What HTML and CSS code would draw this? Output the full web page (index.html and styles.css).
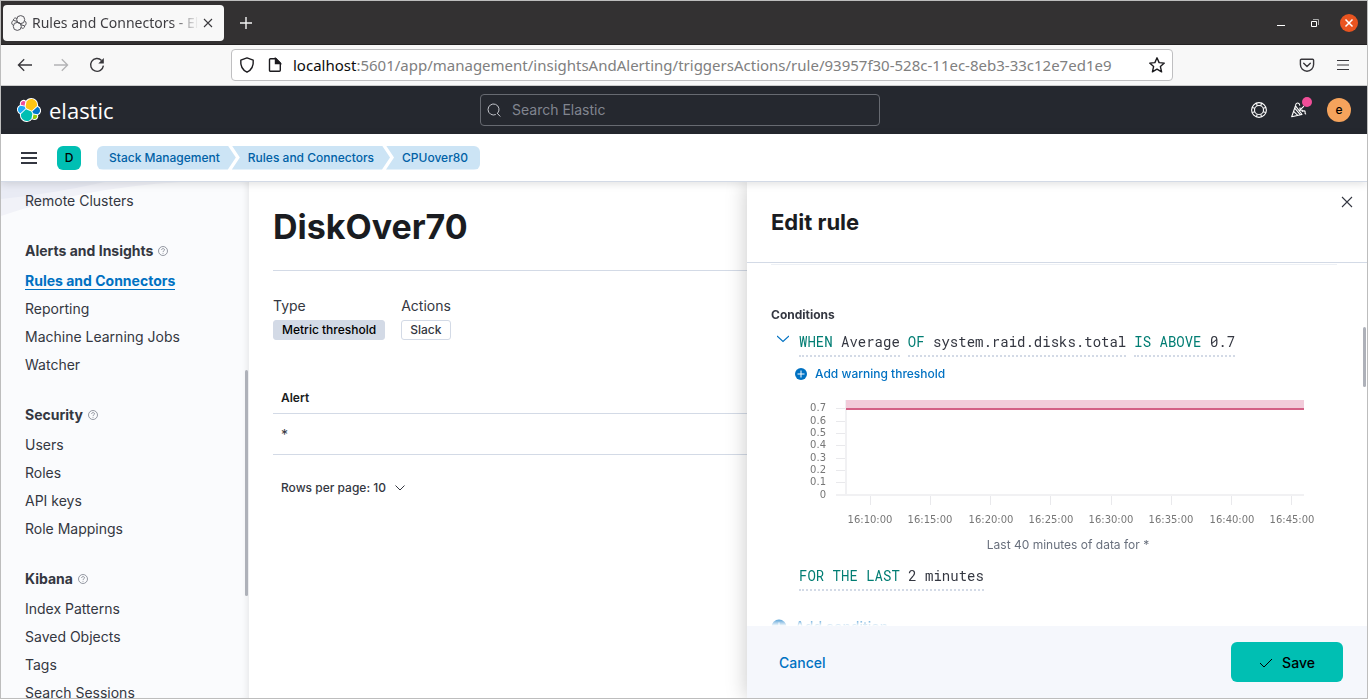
FILE: index.html
```html
<!DOCTYPE html>
<html lang="en">
<head>
<meta charset="utf-8">
<title>Rules and Connectors - Elastic</title>
<link rel="stylesheet" href="styles.css">
</head>
<body>
<div class="window">
  <div class="tabbar">
    <div class="tab">
      <svg class="tab-icon" viewBox="0 0 16 16" width="16" height="16" fill="none" stroke="#55545a"><circle cx="9.7" cy="4.6" r="4"/><circle cx="6.3" cy="11.4" r="4"/><path d="M5.9 3.6a2 2 0 0 0-3.4 1.8M2.5 5.4a2.7 2.7 0 0 0-.2 5M13.4 5.8a2.7 2.7 0 0 1 .2 5M13.6 10.8a2 2 0 0 1-3.5 1.7M2.5 5.4l3.5 1M13.6 10.8l-3.6-1M6.3 6.8l4 2.5"/></svg>
      <span class="tab-title">Rules and Connectors - Elastic</span>
      <button class="icon-btn tab-close" aria-label="Close tab"><svg viewBox="0 0 10 10" width="10" height="10" fill="none" stroke="#3b3a3e" stroke-width="1.1"><path d="M1 1l8 8M9 1L1 9"/></svg></button>
    </div>
    <button class="icon-btn new-tab" aria-label="New tab"><svg viewBox="0 0 12 12" width="12" height="12" stroke="#f4f4f4" stroke-width="1.4"><path d="M6 0v12M0 6h12"/></svg></button>
    <div class="win-controls">
      <button class="icon-btn" aria-label="Minimize"><svg viewBox="0 0 12 12" width="12" height="12"><path d="M2 8h8v1H2z" fill="#fff"/></svg></button>
      <button class="icon-btn" aria-label="Restore"><svg viewBox="0 0 12 12" width="12" height="12" fill="none"><path d="M4 2.500h5.500V8" stroke="#aaa"/><path d="M2.500 4.500h5v5h-5z" stroke="#fff"/></svg></button>
      <button class="icon-btn win-close" aria-label="Close window"><svg viewBox="0 0 10 10" width="10" height="10" stroke="#fff" stroke-width="1.5"><path d="M1.500 1.500l7 7M8.500 1.500l-7 7"/></svg></button>
    </div>
  </div>

  <div class="toolbar">
    <button class="icon-btn" aria-label="Back"><svg viewBox="0 0 16 16" width="16" height="16" fill="none" stroke="#38373b" stroke-width="1.3"><path d="M15 8H1.500M7.200 2.200L1.400 8l5.800 5.800"/></svg></button>
    <button class="icon-btn" aria-label="Forward"><svg viewBox="0 0 16 16" width="16" height="16" fill="none" stroke="#b3b3b5" stroke-width="1.3"><path d="M1 8h13.500M8.800 2.200L14.600 8l-5.800 5.800"/></svg></button>
    <button class="icon-btn" aria-label="Reload"><svg viewBox="0 0 16 16" width="16" height="16" fill="none" stroke="#38373b" stroke-width="1.4"><path d="M12.600 3.400a6.400 6.400 0 1 0 1.800 5.300"/><path d="M14.800 1v5.500H9.300z" fill="#38373b" stroke="none"/></svg></button>
    <div class="urlbar">
      <svg viewBox="0 0 16 16" width="16" height="16" fill="none" stroke="#1c1b1f" stroke-width="1.4"><path d="M8 .9l6.200 2.300c.5 5.200-1.300 9.500-6.200 12-4.900-2.500-6.700-6.800-6.200-12z" stroke-linejoin="round"/></svg>
      <svg viewBox="0 0 16 16" width="16" height="16" fill="none" stroke="#1c1b1f" stroke-width="1.4"><path d="M3.500 1.700H9l4.300 4.300v7.300a1 1 0 0 1-1 1H3.500a1 1 0 0 1-1-1V2.700a1 1 0 0 1 1-1z"/><path d="M8.500 1.500v5h5z" fill="#1c1b1f"/></svg>
      <div class="url" role="textbox" aria-label="Address"><span class="url-host">localhost</span>:5601/app/management/insightsAndAlerting/triggersActions/rule/93957f30-528c-11ec-8eb3-33c12e7ed1e9</div>
      <button class="icon-btn" aria-label="Bookmark"><svg viewBox="0 0 16 16" width="16" height="16" fill="none" stroke="#1c1b1f" stroke-width="1.4" stroke-linejoin="round"><path d="M8 .8l2.100 4.800 5.200.5-3.900 3.500 1.200 5.200L8 12.100l-4.600 2.700 1.200-5.200L.7 6.100l5.200-.5z"/></svg></button>
    </div>
    <div class="toolbar-end">
      <button class="icon-btn" aria-label="Pocket"><svg viewBox="0 0 16 16" width="16" height="16" fill="none" stroke="#38373b" stroke-width="1.400" stroke-linecap="round" stroke-linejoin="round"><path d="M2.400 2.200h11.200a1 1 0 0 1 1 1v4.400a6.600 6.600 0 0 1-13.200 0V3.200a1 1 0 0 1 1-1z"/><path d="M4.700 6.300L8 9.500l3.300-3.200"/></svg></button>
      <button class="icon-btn" aria-label="Menu"><svg viewBox="0 0 16 16" width="16" height="16" stroke="#38373b" stroke-width="1.200"><path d="M2 3.500h12M2 8h12M2 12.500h12"/></svg></button>
    </div>
  </div>

  <header class="topbar">
    <a class="brand" href="#">
      <svg viewBox="0 0 32 32" width="24" height="24"><g stroke="#fff" stroke-width="2.800" stroke-linejoin="round" fill="#fff"><path d="M12.580 13.787l7.002 3.211 7.066-6.213a7.849 7.849 0 0 0 .152-1.557c0-4.287-3.464-7.774-7.722-7.774a7.690 7.690 0 0 0-6.354 3.362l-1.176 6.117z"/><path d="M5.333 21.228a7.964 7.964 0 0 0-.15 1.587c0 4.298 3.481 7.794 7.760 7.794 2.575 0 4.975-1.282 6.410-3.428l1.165-6.095-1.555-2.985-7.035-3.215z"/><path d="M5.288 9.067l4.800 1.137L11.140 4.710a3.785 3.785 0 0 0-6.050 3.014c0 .458.067.909.198 1.343z"/><path d="M4.872 10.214c-2.145.713-3.600 2.785-3.600 5.057 0 2.212 1.362 4.188 3.410 4.970l6.734-6.106-1.236-2.650z"/><path d="M20.873 27.184a3.787 3.787 0 0 0 2.298.783 3.784 3.784 0 0 0 3.583-4.997l-4.796-1.126z"/><path d="M21.848 20.564l5.280 1.238c2.146-.714 3.602-2.786 3.602-5.058a5.337 5.337 0 0 0-3.418-4.960l-6.902 6.052z"/></g><path fill="#fec514" d="M12.580 13.787l7.002 3.211 7.066-6.213a7.849 7.849 0 0 0 .152-1.557c0-4.287-3.464-7.774-7.722-7.774a7.690 7.690 0 0 0-6.354 3.362l-1.176 6.117z"/><path fill="#00bfb3" d="M5.333 21.228a7.964 7.964 0 0 0-.15 1.587c0 4.298 3.481 7.794 7.760 7.794 2.575 0 4.975-1.282 6.410-3.428l1.165-6.095-1.555-2.985-7.035-3.215z"/><path fill="#f04e98" d="M5.288 9.067l4.800 1.137L11.140 4.710a3.785 3.785 0 0 0-6.050 3.014c0 .458.067.909.198 1.343z"/><path fill="#1ba9f5" d="M4.872 10.214c-2.145.713-3.600 2.785-3.600 5.057 0 2.212 1.362 4.188 3.410 4.970l6.734-6.106-1.236-2.650z"/><path fill="#93c90e" d="M20.873 27.184a3.787 3.787 0 0 0 2.298.783 3.784 3.784 0 0 0 3.583-4.997l-4.796-1.126z"/><path fill="#07c" d="M21.848 20.564l5.280 1.238c2.146-.714 3.602-2.786 3.602-5.058a5.337 5.337 0 0 0-3.418-4.960l-6.902 6.052z"/></svg>
      <span>elastic</span>
    </a>
    <label class="search">
      <svg viewBox="0 0 16 16" width="16" height="16" fill="none" stroke="#c3c5cb"><path d="M9.800 12.500a5.500 5.500 0 1 1 1.700-1.200M11 11l3.300 3.500"/></svg>
      <input type="search" placeholder="Search Elastic" aria-label="Search Elastic">
    </label>
    <div class="topbar-end">
      <button class="icon-btn" aria-label="Help"><svg viewBox="0 0 16 16" width="16" height="16" fill="none" stroke="#fff" stroke-width="1.100"><circle cx="8" cy="8" r="7.400"/><circle cx="8" cy="8" r="4.500"/><path d="M5.500 1.200l.7 2.700M10.500 1.200l-.7 2.700M5.500 14.800l.7-2.700M10.500 14.800l-.7-2.700M1.200 5.500l2.700.7M1.200 10.500l2.700-.7M14.800 5.500l-2.700.7M14.800 10.500l-2.700-.7"/></svg></button>
      <button class="icon-btn news" aria-label="News"><svg viewBox="0 0 16 16" width="16" height="16" fill="none" stroke="#fff" stroke-width="1.100" stroke-linejoin="round"><path d="M4.500 3.800L.7 14.800l10.300-2.300zM3.700 6.200l5.500 6.500M2.600 9.300l4.200 4M4.700 3.900C4.300 1.600 6.300.200 8 1.700c.6.600.7 1.300.6 2M8.800 8.200L13 4.200M9 5.500v2.800h2.800M10.800 9.700c1.700-1.500 3.700-.9 3.300.8-.2 1 .2 1.600 1 1.300"/></svg><i class="dot"></i></button>
      <button class="avatar">e</button>
    </div>
  </header>

  <nav class="crumbbar" aria-label="Breadcrumbs">
    <button class="icon-btn" aria-label="Toggle navigation"><svg viewBox="0 0 16 16" width="16" height="16" fill="#343741"><path d="M0 2h16v2H0zM0 7h16v2H0zM0 12h16v2H0z"/></svg></button>
    <button class="space">D</button>
    <div class="crumbs"><a href="#">Stack Management</a><a href="#">Rules and Connectors</a><a href="#">CPUover80</a></div>
  </nav>

  <div class="content">
    <nav class="sidebar" aria-label="Management">
      <svg class="sidebar-art" viewBox="0 0 248 36" width="248" height="36"><path d="M0 0h180Q80 6 0 34z" fill="#f1f2f8"/><path d="M0 0h104Q50 12 0 17z" fill="#e9ebf4"/></svg>
      <ul><li><a href="#">Remote Clusters</a></li></ul>
      <h2>Alerts and Insights <svg viewBox="0 0 10 10" width="10" height="10"><use href="#q"/></svg></h2>
      <ul>
        <li><a class="current" href="#">Rules and Connectors</a></li>
        <li><a href="#">Reporting</a></li>
        <li><a href="#">Machine Learning Jobs</a></li>
        <li><a href="#">Watcher</a></li>
      </ul>
      <h2>Security <svg viewBox="0 0 10 10" width="10" height="10"><use href="#q"/></svg></h2>
      <ul>
        <li><a href="#">Users</a></li>
        <li><a href="#">Roles</a></li>
        <li><a href="#">API keys</a></li>
        <li><a href="#">Role Mappings</a></li>
      </ul>
      <h2>Kibana <svg viewBox="0 0 10 10" width="10" height="10"><g id="q" fill="none" stroke="#7b808c" stroke-width=".8"><circle cx="5" cy="5" r="4.500"/><path d="M3.600 4c0-1.900 2.900-1.800 2.900-.2C6.500 4.900 5 4.800 5 6M5 6.900v.9"/></g></svg></h2>
      <ul>
        <li><a href="#">Index Patterns</a></li>
        <li><a href="#">Saved Objects</a></li>
        <li><a href="#">Tags</a></li>
        <li><a href="#">Search Sessions</a></li>
      </ul>
      <i class="thumb thumb-side"></i>
    </nav>

    <main class="page">
      <h1>DiskOver70</h1>
      <div class="facts">
        <div><div class="fact-label">Type</div><span class="badge badge-solid">Metric threshold</span></div>
        <div><div class="fact-label">Actions</div><span class="badge">Slack</span></div>
      </div>
      <table class="alerts">
        <thead><tr><th scope="col">Alert</th></tr></thead>
        <tbody><tr><td>*</td></tr></tbody>
      </table>
      <button class="rows">Rows per page: 10 <svg viewBox="0 0 10 10" width="10" height="10" fill="none" stroke="#343741"><path d="M.5 2.500L5 7l4.500-4.500"/></svg></button>
    </main>

    <section class="flyout" aria-label="Edit rule">
      <header class="flyout-head">
        <h2>Edit rule</h2>
        <button class="icon-btn flyout-close" aria-label="Close"><svg viewBox="0 0 12 12" width="12" height="12" stroke="#343741" stroke-width="1.100"><path d="M1 1l10 10M11 1L1 11"/></svg></button>
      </header>
      <div class="flyout-body">
        <hr>
        <h3>Conditions</h3>
        <div class="cond">
          <button class="icon-btn toggle" aria-label="Collapse condition"><svg viewBox="0 0 12 12" width="12" height="12" fill="none" stroke="#0071c2" stroke-width="1.100"><path d="M0 3l6 5.500L12 3"/></svg></button>
          <button class="expr"><b>WHEN</b> Average</button>
          <button class="expr"><b>OF</b> system.raid.disks.total</button>
          <button class="expr"><b>IS ABOVE</b> 0.7</button>
        </div>
        <div class="indent">
          <button class="add"><svg viewBox="0 0 12 12" width="12" height="12"><circle cx="6" cy="6" r="6" fill="#0071c2"/><path d="M6 2.500v7M2.500 6h7" stroke="#fff"/></svg>Add warning threshold</button>
          <svg class="chart" viewBox="0 0 546 134" role="img" aria-label="Metric threshold chart">
            <path d="M51 7v95M41 102h468" stroke="#f1f1f3" stroke-width="2" fill="none"/>
            <path d="M41 15.500h9M41 28.500h9M41 40.500h9M41 52.500h9M41 65.500h9M41 77.500h9M41 89.500h9M75.500 103v9M135.500 103v9M195.500 103v9M255.500 103v9M316.500 103v9M376.500 103v9M436.500 103v9M496.500 103v9" stroke="#e9e9ec"/>
            <path d="M51 7h458v9H51z" fill="#f2cbda"/>
            <path d="M51 15h458v2H51z" fill="#d36086"/>
            <g class="y-labels"><text x="31" y="18">0.7</text><text x="31" y="31">0.6</text><text x="31" y="43">0.5</text><text x="31" y="55">0.4</text><text x="31" y="68">0.3</text><text x="31" y="80">0.2</text><text x="31" y="92">0.1</text><text x="31" y="105">0</text></g>
            <g class="x-labels"><text x="75" y="130">16:10:00</text><text x="135" y="130">16:15:00</text><text x="196" y="130">16:20:00</text><text x="256" y="130">16:25:00</text><text x="316" y="130">16:30:00</text><text x="376" y="130">16:35:00</text><text x="437" y="130">16:40:00</text><text x="497" y="130">16:45:00</text></g>
          </svg>
          <p class="caption">Last 40 minutes of data for *</p>
          <button class="expr window-expr"><b>FOR THE LAST</b> 2 minutes</button>
        </div>
        <button class="add add-cond"><svg viewBox="0 0 16 16" width="16" height="16"><circle cx="8" cy="8" r="7.500" fill="#0071c2"/><path d="M8 3.500v9M3.500 8h9" stroke="#fff"/></svg>Add condition</button>
      </div>
      <footer class="flyout-foot">
        <button class="cancel">Cancel</button>
        <button class="save"><svg viewBox="0 0 14 14" width="14" height="14" fill="none" stroke="#000"><path d="M1 7l4 4 8-8"/></svg>Save</button>
      </footer>
      <i class="thumb thumb-fly"></i>
    </section>
  </div>
</div>
</body>
</html>
```
FILE: styles.css
```css
* { box-sizing: border-box; }
body {
  margin: 0;
  font: 14px/20px Inter, "Liberation Sans", sans-serif;
  color: #343741;
}
h1, h2, h3, p, ul { margin: 0; padding: 0; }
ul { list-style: none; }
a { color: inherit; text-decoration: none; }
button { font: inherit; color: inherit; background: none; border: 0; padding: 0; cursor: pointer; white-space: nowrap; }
svg { display: block; flex: none; }
.icon-btn { display: flex; align-items: center; justify-content: center; flex: none; }

.window {
  height: 100vh;
  display: flex;
  flex-direction: column;
  border: 1px solid #bdbdbd;
  background: #fff;
  overflow: hidden;
}

/* Browser chrome */
.tabbar {
  display: flex;
  align-items: center;
  height: 44px;
  flex: none;
  padding: 0 9px 0 2px;
  background: #333132;
  border-bottom: 1px solid #232122;
}
.tab {
  display: flex;
  align-items: center;
  width: 221px;
  height: 36px;
  padding: 0 11px 0 8px;
  border-radius: 4px;
  background: #f8f8f8;
  color: #3e3d41;
  font-family: "Noto Sans", sans-serif;
}
.tab-title {
  flex: 1;
  margin-left: 5px;
  padding-top: 1px;
  overflow: hidden;
  white-space: nowrap;
  mask-image: linear-gradient(to left, transparent 4px, #000 32px);
}
.new-tab { width: 43px; height: 36px; }
.win-controls { display: flex; align-items: center; gap: 22px; margin-left: auto; }
.win-controls .icon-btn:not(.win-close) { position: relative; }
.win-close { width: 18px; height: 18px; margin-left: -3px; border-radius: 50%; background: #e95420; }
.toolbar {
  display: flex;
  align-items: center;
  height: 41px;
  flex: none;
  padding: 0 16px;
  gap: 20px;
  background: #f8f8f8;
  border-bottom: 1px solid #ccc;
}
.urlbar {
  flex: 1;
  min-width: 0;
  display: flex;
  align-items: center;
  gap: 12px;
  height: 32px;
  margin-left: 106px;
  padding: 0 7px;
  border: 1px solid #bfbfc1;
  border-radius: 4px;
  background: #fff;
}
.url {
  flex: 1;
  min-width: 0;
  margin-left: -2px;
  overflow: hidden;
  white-space: nowrap;
  font: 15px/20px "Noto Sans", sans-serif;
  color: #808080;
}
.url-host { color: #0c0c0d; }
.toolbar-end { display: flex; gap: 20px; margin-left: 106px; }

/* Elastic header */
.topbar {
  display: grid;
  grid-template-columns: 1fr 400px 1fr;
  align-items: center;
  height: 48px;
  flex: none;
  padding: 0 16px;
  background: #25282f;
  color: #fff;
}
.brand { display: flex; align-items: center; gap: 8px; font: 400 22px/24px "Open Sans", sans-serif; }
.search {
  display: flex;
  align-items: center;
  gap: 10px;
  height: 32px;
  margin: 0 4px 0 -4px;
  padding: 0 5px;
  border: 1px solid #676a71;
  border-radius: 4px;
}
.search input { flex: 1; min-width: 0; border: 0; outline: 0; padding: 0; background: none; color: #fff; font: inherit; }
.search input::placeholder { color: #81858f; opacity: 1; }
.topbar-end { display: flex; align-items: center; justify-content: flex-end; gap: 20px; }
.news { position: relative; margin: 0 0 0 4px; }
.dot { position: absolute; right: -5px; top: -5px; width: 10px; height: 10px; border-radius: 50%; background: #f04e98; }
.avatar { width: 24px; height: 24px; border-radius: 50%; background: #f5a35c; color: #000; font-size: 12px; font-weight: 500; }

.crumbbar {
  display: flex;
  align-items: center;
  height: 48px;
  flex: none;
  padding: 0 20px;
  border-bottom: 1px solid #d3dae6;
  box-shadow: 0 2px 8px rgba(0, 0, 0, .12);
  background: #fff;
  position: relative;
  z-index: 2;
}
.space { width: 24px; height: 24px; margin: 0 16px 0 20px; border-radius: 6px; background: #00bfb3; color: #000; font-size: 12px; font-weight: 500; }
.crumbs { display: flex; font-size: 12px; font-weight: 500; line-height: 24px; color: #0061a6; }
.crumbs a {
  padding: 0 16px;
  background: #cce4f5;
  clip-path: polygon(0 0, calc(100% - 8px) 0, 100% 50%, calc(100% - 8px) 100%, 0 100%, 8px 50%);
}
.crumbs a + a { margin-left: -4px; }
.crumbs a:first-child { padding-left: 12px; border-radius: 6px 0 0 6px; clip-path: polygon(0 0, calc(100% - 8px) 0, 100% 50%, calc(100% - 8px) 100%, 0 100%); }
.crumbs a:last-child { padding-right: 12px; border-radius: 0 6px 6px 0; clip-path: polygon(0 0, 100% 0, 100% 100%, 0 100%, 8px 50%); }

/* Content */
.content { flex: 1; min-height: 0; display: flex; position: relative; overflow: hidden; }
.sidebar {
  position: relative;
  width: 248px;
  flex: none;
  padding: 5px 24px 0;
  overflow: hidden;
  background: #fafbfd;
  color: #343741;
  box-shadow: inset -6px 0 6px -4px rgba(0, 0, 0, .08);
}
.sidebar-art { position: absolute; left: 0; top: 0; }
.sidebar ul { position: relative; }
.sidebar li { line-height: 28px; }
.sidebar h2 { display: flex; align-items: center; gap: 5px; margin: 24px 0 4px; font-size: 14px; line-height: 24px; font-weight: 700; }
.sidebar .current { color: #0071c2; font-weight: 700; border-bottom: 1px solid #0071c2; }
.thumb { position: absolute; width: 3px; border-radius: 2px; background: #aeb1b9; }
.thumb-side { right: 1px; top: 188px; height: 226px; }
.thumb-fly { right: 1px; top: 145px; height: 60px; }

.page { flex: 1; min-width: 0; padding: 24px 24px 0; }
.page h1 { padding-bottom: 22px; border-bottom: 1px solid #d3dae6; font-size: 34px; line-height: 42px; font-weight: 700; color: #1a1c21; }
.facts { display: flex; gap: 16px; margin: 24px 0 40px; }
.fact-label { margin-bottom: 4px; line-height: 21px; }
.badge { display: block; padding: 0 8px; border: 1px solid #d3dae6; border-radius: 3px; font-size: 12px; line-height: 18px; font-weight: 500; }
.badge-solid { background: #d3dae6; color: #000; }
.alerts { width: 100%; border-collapse: collapse; font-size: 12px; text-align: left; }
.alerts th { padding: 9px 8px 7px; line-height: 17px; font-weight: 600; color: #1a1c21; border-bottom: 1px solid #d3dae6; }
.alerts td { padding: 11px 8px 9px; font-size: 14px; line-height: 20px; border-bottom: 1px solid #d3dae6; }
.rows { display: flex; align-items: center; gap: 9px; height: 32px; margin: 17px 8px 0; font-size: 12px; font-weight: 500; }

/* Flyout */
.flyout {
  position: absolute;
  top: 0;
  right: 0;
  bottom: 0;
  width: min(620px, 100%);
  display: flex;
  flex-direction: column;
  background: #fff;
  box-shadow: 0 0 20px rgba(0, 0, 0, .22);
}
.flyout-head { display: flex; justify-content: space-between; padding: 24px 14px 24px 24px; border-bottom: 1px solid #d3dae6; }
.flyout-head h2 { font-size: 22px; line-height: 32px; font-weight: 700; color: #1a1c21; }
.flyout-close { width: 12px; height: 12px; margin-top: -10px; }
.flyout-body {
  flex: 1;
  min-height: 0;
  overflow: hidden;
  padding: 1px 26px 0 24px;
  mask-image: linear-gradient(to top, transparent, #000 10px);
}
.flyout-body hr { height: 1px; margin: 0 4px 41px 0; border: 0; background: #edf0f5; }
.flyout-body h3 { margin-bottom: 6px; font-size: 12px; line-height: 18px; font-weight: 700; }
.cond { display: flex; gap: 8px; }
.toggle { width: 24px; height: 18px; margin-right: -4px; }
.expr {
  padding-bottom: 1px;
  border-bottom: 2px dotted #d3dae6;
  font: 14px/24px "Roboto Mono", "DejaVu Sans Mono", monospace;
  color: #343741;
}
.expr b { font-weight: 400; color: #017d73; }
.indent { padding-left: 24px; }
.add { display: flex; align-items: center; gap: 8px; height: 24px; margin-top: 5px; font-size: 12px; font-weight: 500; color: #0071c2; }
.chart { width: 100%; height: auto; margin: 7px 0 9px; font: 10px "DejaVu Sans", sans-serif; }
.chart text { fill: #777; }
.y-labels { text-anchor: end; }
.x-labels { text-anchor: middle; }
.caption { font-size: 12px; line-height: 18px; text-align: center; color: #69707d; }
.window-expr { margin: 10px 0 0 4px; }
.add-cond { margin-top: 24px; font-size: 14px; }
.flyout-foot { display: flex; align-items: center; justify-content: space-between; height: 72px; padding: 0 24px 0 32px; background: #f5f7fc; line-height: 22px; font-weight: 500; }
.cancel { padding-top: 1px; color: #0071c2; }
.save { display: flex; align-items: center; justify-content: center; gap: 9px; min-width: 112px; height: 40px; padding-top: 1px; border-radius: 6px; background: #00bfb3; color: #000; }
```
